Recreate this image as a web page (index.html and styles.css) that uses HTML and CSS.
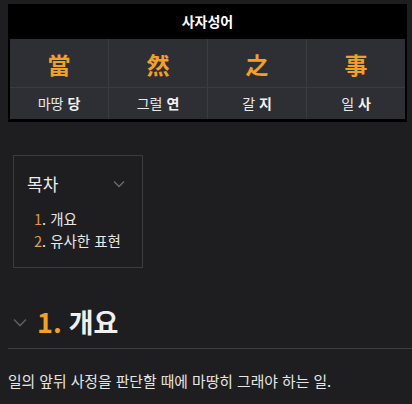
FILE: index.html
```html
<!DOCTYPE html>
<html lang="ko">
<head>
<meta charset="utf-8">
<link rel="stylesheet" href="styles.css">
</head>
<body>
<div class="idiom">
  <div class="idiom-title">사자성어</div>
  <div class="idiom-grid">
    <div class="hanja">當</div>
    <div class="hanja">然</div>
    <div class="hanja">之</div>
    <div class="hanja">事</div>
    <div class="read">마땅 <b>당</b></div>
    <div class="read">그럴 <b>연</b></div>
    <div class="read">갈 <b>지</b></div>
    <div class="read">일 <b>사</b></div>
  </div>
</div>

<div class="toc">
  <div class="toc-head">
    <span class="toc-title">목차</span>
    <svg class="chev" width="12" height="8" viewBox="0 0 12 8"><path d="M1 1.5 L6 6.5 L11 1.5" fill="none" stroke="#6c6c70" stroke-width="1.3"/></svg>
  </div>
  <ol class="toc-list">
    <li><span class="num">1</span>. 개요</li>
    <li><span class="num">2</span>. 유사한 표현</li>
  </ol>
</div>

<h2 class="sec">
  <svg class="chev2" width="14" height="9" viewBox="0 0 14 9"><path d="M1 1.5 L7 7.5 L13 1.5" fill="none" stroke="#5c5d62" stroke-width="1.6"/></svg>
  <span class="secnum">1.</span> <span>개요</span>
</h2>
<p class="para">일의 앞뒤 사정을 판단할 때에 마땅히 그래야 하는 일.</p>
</body>
</html>
```

FILE: styles.css
```css
html, body {
  margin: 0;
  padding: 0;
  background: #1e1e20;
  color: #e6e6e6;
  font-family: "Noto Sans CJK KR", "Noto Sans", sans-serif;
}
body {
  padding: 4px 5px 0 8px;
  overflow: hidden;
}
.idiom {
  width: 399px;
  background: #000;
  box-sizing: border-box;
  padding: 0 2px 3px 2px;
}
.idiom-title {
  height: 35px;
  line-height: 34px;
  text-align: center;
  color: #fff;
  font-weight: 700;
  font-size: 14px;
}
.idiom-grid {
  display: grid;
  grid-template-columns: repeat(4, 1fr);
  background: #3b3c41;
  gap: 1px;
}
.hanja, .read {
  background: #2e2f34;
  text-align: center;
}
.hanja {
  height: 48px;
  line-height: 50px;
  color: #f1a02a;
  font-size: 23px;
  font-weight: 700;
}
.read {
  height: 31px;
  line-height: 31px;
  font-size: 14px;
  color: #e8e8e8;
}
.read b { font-weight: 700; color: #f2f2f2; }

.toc {
  margin: 33px 0 0 5px;
  width: 130px;
  height: 113px;
  box-sizing: border-box;
  border: 1px solid #3c3c3f;
  padding: 17px 14px 0 13px;
}
.toc-head {
  display: flex;
  align-items: center;
  justify-content: space-between;
}
.toc-title {
  font-size: 17px;
  line-height: 22px;
  color: #ececec;
}
.chev { margin-right: 3px; }
.toc-list {
  list-style: none;
  margin: 13px 0 0 7px;
  padding: 0;
  font-size: 14.5px;
  line-height: 22px;
  color: #e8e8e8;
}
.num { color: #e29a4a; }

.sec {
  margin: 36px 0 0 0;
  display: flex;
  align-items: center;
  height: 35px;
  padding-bottom: 9px;
  border-bottom: 1px solid #3e3e42;
  font-size: 27px;
  font-weight: 700;
  color: #f0f0f0;
  margin-right: -5px;
}
.chev2 { margin: 2px 10px 0 5px; }
.secnum { color: #f1a02a; margin-right: 7px; }
.para {
  margin: 21px 0 0 0;
  font-size: 14.8px;
  line-height: 22px;
  color: #e6e6e6;
}
```
